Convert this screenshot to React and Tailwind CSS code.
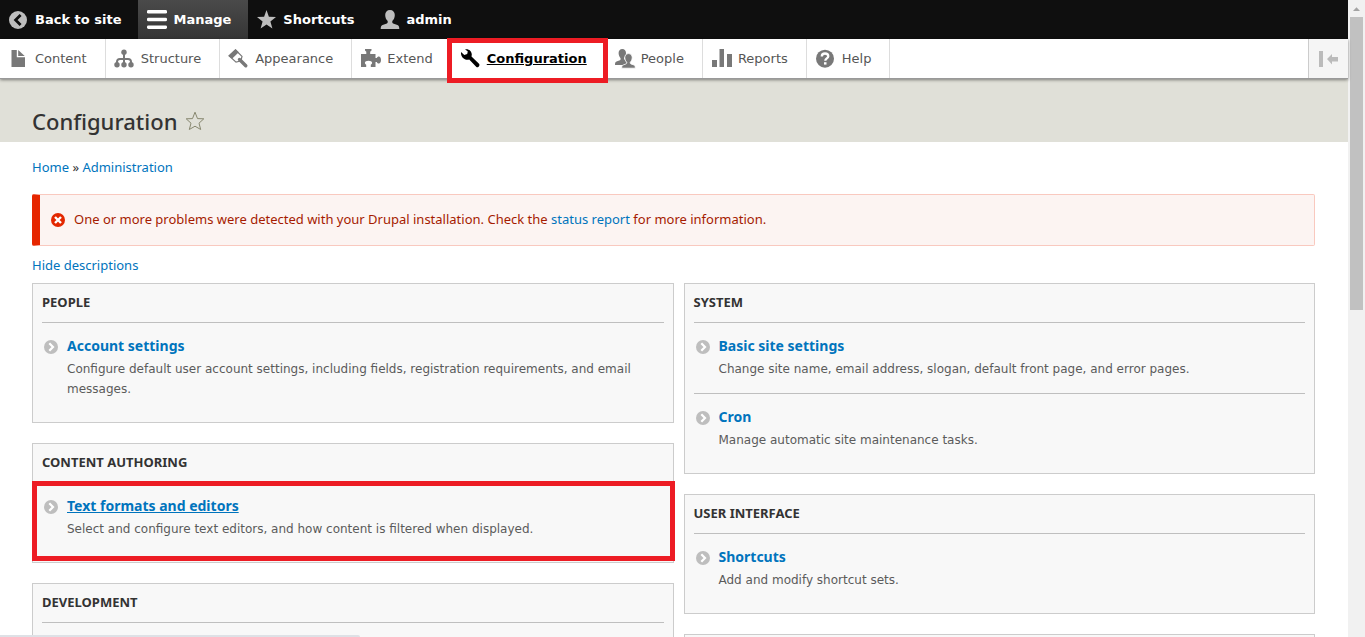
import React from "react";

const Icon = ({ children, className = "" }) => (
  <svg viewBox="0 0 20 19" className={`h-[19px] w-5 shrink-0 overflow-visible ${className}`} fill="currentColor" aria-hidden="true">
    {children}
  </svg>
);

const BackIcon = () => (
  <Icon>
    <circle cx="9" cy="10" r="9" />
    <path d="M11.6 5 6.6 10l5 5" fill="none" stroke="#0f0f0f" strokeWidth="2.8" />
  </Icon>
);
const MenuIcon = () => (
  <Icon className="text-white">
    <rect x="0" y="0" width="20" height="3.6" rx="1.4" />
    <rect x="0" y="7.7" width="20" height="3.6" rx="1.4" />
    <rect x="0" y="15.4" width="20" height="3.6" rx="1.4" />
  </Icon>
);
const StarIcon = () => (
  <Icon>
    <path d="M9.500 0 11.900 6.800 19 7 13.400 11.400 15.400 18.500 9.500 14.400 3.600 18.500 5.600 11.400 0 7 7.100 6.800z" />
  </Icon>
);
const UserIcon = () => (
  <Icon>
    <path d="M10 0c3 0 4.800 2 4.800 5 0 2.600-1 4.600-2.300 5.800-.5.700-.3 2.200.6 2.600l4.300 1.500c1.300.5 1.900 1.500 1.900 4.100H.7c0-2.600.6-3.600 1.900-4.100l4.300-1.500c.9-.4 1.100-1.900.6-2.600C6.200 9.600 5.200 7.600 5.200 5c0-3 1.800-5 4.800-5z" />
  </Icon>
);
const FileIcon = () => (
  <Icon>
    <path d="M2.500 1h5.300v7.200H16V18H2.500z" />
    <path d="M9.200 1 15.700 7H9.200z" />
  </Icon>
);
const TreeIcon = () => (
  <Icon>
    <path d="M9 3v13M2 16v-3.200q0-2.800 3-2.800h8q3 0 3 2.800V16" fill="none" stroke="currentColor" strokeWidth="2" />
    <circle cx="9" cy="3.300" r="2.700" />
    <circle cx="2" cy="15.700" r="2.700" />
    <circle cx="9" cy="15.700" r="2.700" />
    <circle cx="16" cy="15.700" r="2.700" />
  </Icon>
);
const BrushIcon = () => (
  <Icon>
    <path d="M6.500 1 13 7.400 12.300 10.200 10.500 12.300 7 13.200.3 7z" fill="none" stroke="currentColor" strokeWidth="1.200" />
    <path d="M6.500 0 9.800 3.200 3 9.700-.8 6.700z" />
    <path d="M10.500 10.500 16.800 16.800" stroke="currentColor" strokeWidth="3.400" strokeLinecap="round" />
  </Icon>
);
const PuzzleIcon = () => (
  <Icon>
    <path d="M0 5h5.300V2.800L4 1.500V0h6.500v1.500L9.200 2.800V5h5.300v4h1.300c.4-1 1.200-1.500 2-1.500 1.300 0 2.200 1.500 2.200 3.500s-.9 3.500-2.200 3.500c-.8 0-1.600-.5-2-1.500h-1.300v5H9.800v-2.300c1-.6 1.300-1.300 1.300-2 0-1.300-1.500-2-3.600-2s-3.600.7-3.600 2c0 .7.3 1.400 1.300 2V18H0z" />
  </Icon>
);
const WrenchIcon = () => (
  <Icon>
    <path d="M4 .3C7.500-.5 10.700 1.700 10.800 5.500L10.500 7.600 18 14.700C19.300 16.300 17.400 19 15.400 18L8.200 10.600C4 11.700-.5 8.500 0 3L3.300 5.900 6.200 5 6.800 2.400z" />
  </Icon>
);
const PeopleIcon = () => (
  <Icon>
    <path d="M7.300 0c2.400 0 3.700 1.700 3.700 4 0 2-.8 3.500-1.800 4.500-.4.600-.2 1.700.5 2L13 16H0c0-2.200.4-3.100 1.500-3.500l3.400-1.300c.7-.3.900-1.700.5-2.300C4.400 7.900 3.600 6 3.600 4c0-2.300 1.300-4 3.700-4z" />
    <path d="M13.500 4.600c2.400 0 3.700 1.700 3.700 4 0 2-.8 3.500-1.800 4.500-.4.600-.2 1.500.5 1.800l3 1.100c1 .4 1.400 1.100 1.400 3.200H6.700c0-2.100.4-2.800 1.400-3.200l3-1.100c.7-.3.900-1.200.5-1.800-1-1-1.800-2.500-1.800-4.500 0-2.300 1.300-4 3.700-4z" stroke="#fff" strokeWidth=".8" />
  </Icon>
);
const ChartIcon = () => (
  <Icon>
    <rect x="0" y="11" width="5" height="7" />
    <rect x="7.500" y="0" width="4.500" height="18" />
    <rect x="15" y="5" width="5" height="13" />
  </Icon>
);
const HelpIcon = () => (
  <Icon>
    <circle cx="9" cy="9.700" r="9" />
    <path d="M5.800 7.500C5.800 5.500 7.200 4.500 9 4.500s3.300 1 3.300 2.700c0 2.200-3 2.300-3 4.600" fill="none" stroke="#fff" strokeWidth="2.300" />
    <rect x="8" y="13.200" width="2.500" height="2.400" fill="#fff" />
  </Icon>
);

const topItems = [
  { label: "Back to site", Glyph: BackIcon },
  { label: "Manage", Glyph: MenuIcon, active: true },
  { label: "Shortcuts", Glyph: StarIcon },
  { label: "admin", Glyph: UserIcon },
];

const trayItems = [
  { label: "Content", Glyph: FileIcon },
  { label: "Structure", Glyph: TreeIcon },
  { label: "Appearance", Glyph: BrushIcon },
  { label: "Extend", Glyph: PuzzleIcon },
  { label: "Configuration", Glyph: WrenchIcon, active: true },
  { label: "People", Glyph: PeopleIcon },
  { label: "Reports", Glyph: ChartIcon },
  { label: "Help", Glyph: HelpIcon },
];

const leftPanels = [
  {
    title: "People",
    items: [{ name: "Account settings", text: "Configure default user account settings, including fields, registration requirements, and email messages." }],
  },
  {
    title: "Content authoring",
    items: [{ name: "Text formats and editors", text: "Select and configure text editors, and how content is filtered when displayed.", marked: true }],
  },
  { title: "Development", items: [] },
];

const rightPanels = [
  {
    title: "System",
    items: [
      { name: "Basic site settings", text: "Change site name, email address, slogan, default front page, and error pages." },
      { name: "Cron", text: "Manage automatic site maintenance tasks." },
    ],
  },
  { title: "User interface", items: [{ name: "Shortcuts", text: "Add and modify shortcut sets." }] },
];

function Panel({ title, items }) {
  return (
    <section className="border border-[#ccc] bg-[#f8f8f8] px-[9px] pb-[9px]">
      <h2 className="h-[38px] text-[13px] leading-[37px] font-bold text-[#333] uppercase">{title}</h2>
      {items.length === 0 && <div className="h-20 border-t border-[#bfbfbf]" />}
      {items.map(({ name, text, marked }) => (
        <div key={name} className="relative flex gap-[9px] border-t border-[#bfbfbf] pt-[10px] pb-[14px] pl-[2px]">
          <svg viewBox="0 0 14 14" className="mt-[7px] h-[14px] w-[14px] shrink-0" aria-hidden="true">
            <circle cx="7" cy="7" r="7" fill="#bebebe" />
            <path d="M5.300 3.200 9 7l-3.700 3.800" fill="none" stroke="#fff" strokeWidth="2.200" />
          </svg>
          <div>
            <h3 className="text-sm leading-[26px] font-bold">
              <a href="#" className={marked ? "text-[#0074bd] underline" : "text-[#0074bd]"}>{name}</a>
            </h3>
            <p className="font-['DejaVu_Sans',sans-serif] text-xs leading-5 text-[#5b5b5b]">{text}</p>
          </div>
          {marked && <div className="pointer-events-none absolute -top-[2px] -right-[11px] -bottom-[8px] -left-[10px] border-[5px] border-[#ed1c24]" />}
        </div>
      ))}
    </section>
  );
}

export default function App() {
  return (
    <div className="relative flex h-screen overflow-hidden bg-white font-['Noto_Sans',sans-serif] text-[13px] text-[#333]">
      <div className="min-w-0 flex-1">
        <nav aria-label="Toolbar" className="flex h-[39px] bg-[#0f0f0f] font-['DejaVu_Sans',sans-serif] font-bold text-white">
          {topItems.map(({ label, Glyph, active }) => (
            <a
              key={label}
              href="#"
              className={`flex items-center gap-[6px] pr-[17px] pl-[9px] text-[#bebebe] ${active ? "bg-linear-to-b from-[#4a4a4a] to-[#353535]" : ""}`}
            >
              <Glyph />
              <span className="text-white">{label}</span>
            </a>
          ))}
        </nav>
        <nav
          aria-label="Administration menu"
          className="relative flex h-10 border-b border-[#999] bg-white font-['DejaVu_Sans',sans-serif] text-[#565656] shadow-[0_1px_3px_rgba(0,0,0,0.45)]"
        >
          {trayItems.map(({ label, Glyph, active }) => (
            <a
              key={label}
              href="#"
              className={`relative flex items-center gap-[6px] border-r border-[#ddd] pr-[18px] pl-[9px] ${active ? "font-bold text-black" : "text-[#787878]"}`}
            >
              <Glyph />
              <span className={active ? "underline" : "text-[#565656]"}>{label}</span>
              {active && <span className="pointer-events-none absolute -top-px -right-[3px] -bottom-[5px] -left-[5px] z-10 border-[5px] border-[#ed1c24]" />}
            </a>
          ))}
          <button type="button" aria-label="Vertical orientation" className="ml-auto flex w-10 items-center justify-center border-l border-[#ccc] bg-[#f5f5f5] text-[#bbb]">
            <Icon>
              <rect x="0" y="2" width="4" height="16" />
              <path d="M8 10 13 5v3h6v4.500h-6v3z" />
            </Icon>
          </button>
        </nav>
        <header className="flex h-[63px] items-center gap-2 bg-[#e0e0d8] px-8 pt-5">
          <h1 className="text-[22px] leading-7 font-medium">Configuration</h1>
          <button type="button" aria-label="Add to shortcuts">
            <svg viewBox="0 0 20 20" className="h-5 w-5" fill="none" stroke="#87876f" aria-hidden="true">
              <path d="M10 1.200 12.500 7.600 18.800 7.800 14 12.200 15.700 18.500 10 15.200 4.300 18.500 6 12.200 1.200 7.800 7.500 7.600z" strokeLinejoin="round" />
            </svg>
          </button>
        </header>
        <main className="pr-[33px] pl-8">
          <nav aria-label="Breadcrumb" className="pt-[15px] leading-5">
            <a href="#" className="text-[#0074bd]">Home</a> » <a href="#" className="text-[#0074bd]">Administration</a>
          </nav>
          <div role="alert" className="mt-[17px] flex h-[52px] items-center gap-[9px] rounded-[2px] border border-l-8 border-[#f9c9bf] border-l-[#e62600] bg-[#fcf4f2] pl-[11px] text-[#a51b00]">
            <svg viewBox="0 0 14 14" className="h-[14px] w-[14px] shrink-0" aria-hidden="true">
              <circle cx="7" cy="7" r="7" fill="#e32700" />
              <path d="m4 4 6 6M10 4l-6 6" stroke="#fff" strokeWidth="2.400" />
            </svg>
            <p>
              One or more problems were detected with your Drupal installation. Check the <a href="#" className="text-[#0074bd]">status report</a> for more information.
            </p>
          </div>
          <a href="#" className="mt-[9px] block w-fit leading-5 text-[#0074bd]">Hide descriptions</a>
          <div className="mt-2 flex items-start gap-[10px]">
            <div className="flex w-1/2 shrink-0 flex-col gap-5">
              {leftPanels.map((p) => <Panel key={p.title} {...p} />)}
            </div>
            <div className="flex min-w-0 flex-1 flex-col gap-5">
              {rightPanels.map((p) => <Panel key={p.title} {...p} />)}
              <section className="h-20 border border-[#ccc] bg-[#f8f8f8]" />
            </div>
          </div>
        </main>
      </div>
      <div className="flex w-[17px] shrink-0 flex-col items-center bg-[#f1f1f1]" aria-hidden="true">
        <svg viewBox="0 0 17 17" className="h-[17px] w-[17px] shrink-0">
          <path d="M5 11 8.500 7.200 12 11z" fill="#a3a3a3" />
        </svg>
        <div className="h-[46%] w-[13px] bg-[#c1c1c1]" />
      </div>
      <div className="absolute bottom-0 left-0 h-[2px] w-[360px] rounded-tr bg-[#dee1e6]" />
    </div>
  );
}
